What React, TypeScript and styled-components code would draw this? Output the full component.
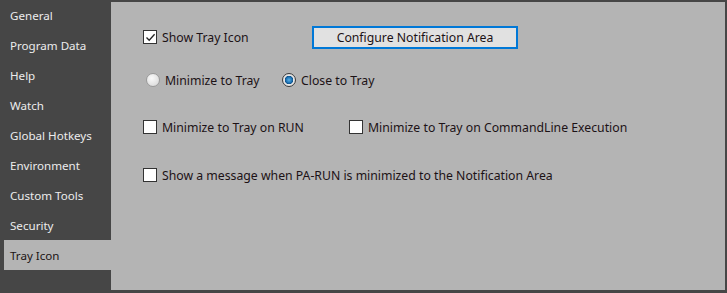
import styled, { createGlobalStyle } from "styled-components";

const GlobalStyle = createGlobalStyle`
  html, body {
    margin: 0;
    padding: 0;
    background: #464646;
  }
  body {
    font-family: "Noto Sans", "DejaVu Sans", sans-serif;
    font-size: 12.25px;
  }
`;

const Window = styled.div`
  width: 727px;
  height: 293px;
  display: grid;
  grid-template-columns: 111px 1fr;
  background: #464646;
  box-sizing: border-box;
  padding: 0 2px 3px 0;
`;

const Sidebar = styled.nav`
  display: flex;
  flex-direction: column;
  padding: 0 0 0 4px;
  font-size: 11.6px;
`;

const Tab = styled.div<{ $active?: boolean }>`
  height: 30px;
  display: flex;
  align-items: center;
  padding-left: 6px;
  color: ${({ $active }) => ($active ? "#1c1414" : "#ececec")};
  background: ${({ $active }) => ($active ? "#b4b4b4" : "transparent")};
  white-space: nowrap;
`;

const Panel = styled.section`
  margin-top: 2px;
  background: #b4b4b4;
  padding: 23px 0 0 32px;
  display: flex;
  flex-direction: column;
  color: #1c1216;
`;

const Row = styled.div<{ $mt?: number }>`
  display: flex;
  align-items: center;
  margin-top: ${({ $mt }) => $mt ?? 0}px;
  height: 24px;
`;

const Check = styled.label<{ $width?: number }>`
  display: flex;
  align-items: center;
  gap: 5px;
  width: ${({ $width }) => ($width ? `${$width}px` : "auto")};
  white-space: nowrap;
`;

const Box = styled.span`
  width: 14px;
  height: 14px;
  box-sizing: border-box;
  border: 1px solid #333;
  background: #fff;
  display: inline-flex;
  align-items: center;
  justify-content: center;
`;

const Radio = styled.label<{ $width?: number }>`
  display: flex;
  align-items: center;
  gap: 5px;
  width: ${({ $width }) => ($width ? `${$width}px` : "auto")};
  white-space: nowrap;
  padding-left: 3px;
`;

const RadioDot = styled.span<{ $on?: boolean }>`
  width: 14px;
  height: 14px;
  box-sizing: border-box;
  border-radius: 50%;
  border: 1px solid ${({ $on }) => ($on ? "#3c3c3c" : "#9a9a9a")};
  background: ${({ $on }) =>
    $on
      ? "radial-gradient(circle, #5ab0e8 0, #1a6fb0 3px, #0f4f86 4px, #e8e8e8 4.5px, #d0d0d0 100%)"
      : "radial-gradient(circle at 40% 35%, #fafafa, #d4d4d4)"};
`;

const Button = styled.button`
  width: 206px;
  height: 23px;
  box-sizing: border-box;
  border: 2px solid #0078d7;
  background: #e1e1e1;
  font: inherit;
  color: #1c1216;
  padding: 0;
`;

const tabs = [
  "General",
  "Program Data",
  "Help",
  "Watch",
  "Global Hotkeys",
  "Environment",
  "Custom Tools",
  "Security",
  "Tray Icon",
];

function Tick() {
  return (
    <svg width="11" height="11" viewBox="0 0 11 11">
      <path d="M1.5 5.5 L4.2 8.3 L9.6 2.2" fill="none" stroke="#222" strokeWidth="1.3" />
    </svg>
  );
}

export default function App() {
  return (
    <>
      <GlobalStyle />
      <Window>
        <Sidebar>
          {tabs.map((t) => (
            <Tab key={t} $active={t === "Tray Icon"}>
              {t}
            </Tab>
          ))}
        </Sidebar>
        <Panel>
          <Row>
            <Check $width={169}>
              <Box>
                <Tick />
              </Box>
              Show Tray Icon
            </Check>
            <Button>Configure Notification Area</Button>
          </Row>
          <Row $mt={19}>
            <Radio $width={133}>
              <RadioDot />
              Minimize to Tray
            </Radio>
            <Radio>
              <RadioDot $on />
              Close to Tray
            </Radio>
          </Row>
          <Row $mt={23}>
            <Check $width={206}>
              <Box />
              Minimize to Tray on RUN
            </Check>
            <Check>
              <Box />
              Minimize to Tray on CommandLine Execution
            </Check>
          </Row>
          <Row $mt={24}>
            <Check>
              <Box />
              Show a message when PA-RUN is minimized to the Notification Area
            </Check>
          </Row>
        </Panel>
      </Window>
    </>
  );
}
